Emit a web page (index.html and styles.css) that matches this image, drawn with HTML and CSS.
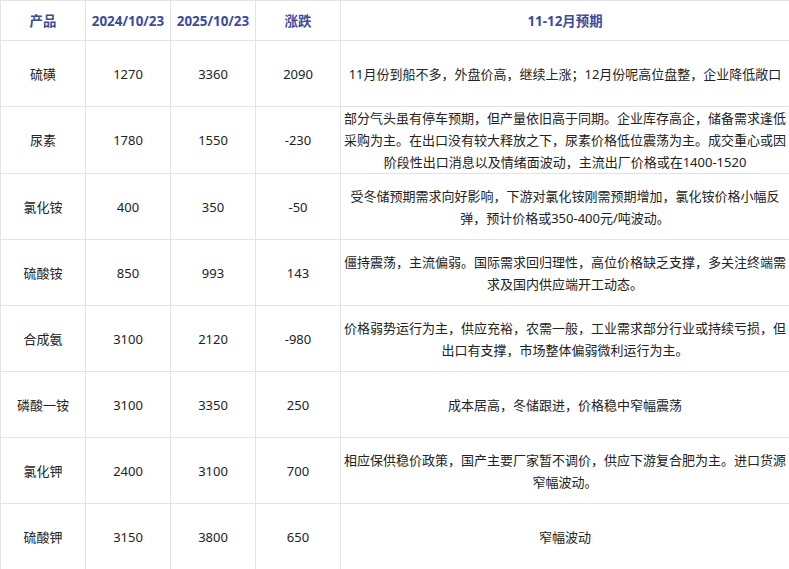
FILE: index.html
```html
<!DOCTYPE html>
<html lang="zh-CN">
<head>
<meta charset="utf-8">
<title>化肥价格对比</title>
<link rel="stylesheet" href="styles.css">
</head>
<body>
<table class="price-table">
  <colgroup>
    <col class="c-name"><col class="c-num"><col class="c-num"><col class="c-num"><col class="c-text">
  </colgroup>
  <thead>
    <tr class="head-row">
      <th>产品</th><th>2024/10/23</th><th>2025/10/23</th><th>涨跌</th><th>11-12月预期</th>
    </tr>
  </thead>
  <tbody>
    <tr><td>硫磺</td><td>1270</td><td>3360</td><td>2090</td><td>11月份到船不多，外盘价高，继续上涨；12月份呢高位盘整，企业降低敞口</td></tr>
    <tr><td>尿素</td><td>1780</td><td>1550</td><td>-230</td><td>部分气头虽有停车预期，但产量依旧高于同期。企业库存高企，储备需求逢低<br>采购为主。在出口没有较大释放之下，尿素价格低位震荡为主。成交重心或因<br>阶段性出口消息以及情绪面波动，主流出厂价格或在1400-1520</td></tr>
    <tr><td>氯化铵</td><td>400</td><td>350</td><td>-50</td><td>受冬储预期需求向好影响，下游对氯化铵刚需预期增加，氯化铵价格小幅反<br>弹，预计价格或350-400元/吨波动。</td></tr>
    <tr><td>硫酸铵</td><td>850</td><td>993</td><td>143</td><td>僵持震荡，主流偏弱。国际需求回归理性，高位价格缺乏支撑，多关注终端需<br>求及国内供应端开工动态。</td></tr>
    <tr><td>合成氨</td><td>3100</td><td>2120</td><td>-980</td><td>价格弱势运行为主，供应充裕，农需一般，工业需求部分行业或持续亏损，但<br>出口有支撑，市场整体偏弱微利运行为主。</td></tr>
    <tr><td>磷酸一铵</td><td>3100</td><td>3350</td><td>250</td><td>成本居高，冬储跟进，价格稳中窄幅震荡</td></tr>
    <tr><td>氯化钾</td><td>2400</td><td>3100</td><td>700</td><td>相应保供稳价政策，国产主要厂家暂不调价，供应下游复合肥为主。进口货源<br>窄幅波动。</td></tr>
    <tr><td>硫酸钾</td><td>3150</td><td>3800</td><td>650</td><td>窄幅波动</td></tr>
  </tbody>
</table>
</body>
</html>
```

FILE: styles.css
```css
html, body {
  margin: 0;
  padding: 0;
  background: #ffffff;
}

.price-table {
  border-collapse: collapse;
  table-layout: fixed;
  width: 789px;
  font-family: "Noto Sans", "Noto Sans CJK SC", sans-serif;
  font-size: 13px;
  line-height: 22px;
  color: #222222;
}

.c-name, .c-num { width: 85px; }
.c-text { width: 449px; }

.price-table th,
.price-table td {
  border: 1px solid #e3e3e3;
  text-align: center;
  vertical-align: middle;
  padding: 0;
  white-space: nowrap;
}

.price-table td { font-size: 13px; }

.head-row { height: 40px; }
.price-table tbody tr { height: 66px; }

.price-table th {
  color: #3c4b9c;
  font-weight: bold;
  font-size: 13.4px;
}
```
